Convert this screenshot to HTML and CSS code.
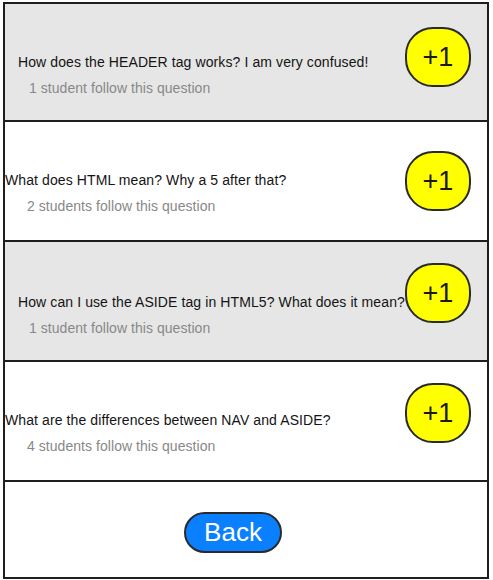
FILE: index.html
```html
<!DOCTYPE html>
<html>
<head>
<meta charset="utf-8">
<link rel="stylesheet" href="styles.css">
</head>
<body>
<div class="board">
  <div class="row row--gray row--first">
    <div class="text text--inset">
      <div class="question">How does the HEADER tag works? I am very confused!</div>
      <div class="follow">1 student follow this question</div>
    </div>
    <div class="plus plus--a">+1</div>
  </div>
  <div class="row">
    <div class="text">
      <div class="question">What does HTML mean? Why a 5 after that?</div>
      <div class="follow follow--deep">2 students follow this question</div>
    </div>
    <div class="plus plus--b">+1</div>
  </div>
  <div class="row row--gray">
    <div class="text text--inset text--low">
      <div class="question">How can I use the ASIDE tag in HTML5? What does it mean?</div>
      <div class="follow">1 student follow this question</div>
    </div>
    <div class="plus plus--c">+1</div>
  </div>
  <div class="row">
    <div class="text">
      <div class="question">What are the differences between NAV and ASIDE?</div>
      <div class="follow follow--deep">4 students follow this question</div>
    </div>
    <div class="plus plus--c">+1</div>
  </div>
  <div class="footer">
    <div class="back">Back</div>
  </div>
</div>
</body>
</html>
```

FILE: styles.css
```css
html, body {
  margin: 0;
  padding: 0;
  background: #fff;
}

body {
  font-family: "Liberation Sans", Arial, sans-serif;
  color: #141414;
}

.board {
  margin: 2px 0 0 3px;
  width: 486px;
  box-sizing: border-box;
  border: 2px solid #1e1e1e;
}

.row {
  display: flex;
  align-items: flex-start;
  height: 120px;
  box-sizing: border-box;
  border-bottom: 2px solid #1e1e1e;
  padding-right: 16px;
  background: #fff;
}

.row--first {
  height: 118px;
}

.row--gray {
  background: #e6e6e6;
}

.text {
  flex: 1 1 auto;
  min-width: 0;
  white-space: nowrap;
  padding-top: 48px;
}

.text--inset {
  padding-left: 13px;
}

.text--low {
  padding-top: 50px;
}

.question {
  font-size: 14px;
  line-height: 20px;
  letter-spacing: 0.1px;
}

.follow {
  margin-top: 6px;
  font-size: 14px;
  line-height: 20px;
  color: #888;
  padding-left: 11px;
  letter-spacing: 0.05px;
}

.follow--deep {
  padding-left: 22px;
}

.plus {
  flex: 0 0 auto;
  width: 66px;
  height: 60px;
  box-sizing: border-box;
  border: 2px solid #2a2a2a;
  border-radius: 28px;
  background: #ffff00;
  color: #1a1a1a;
  font-size: 27px;
  line-height: 56px;
  text-align: center;
}

.plus--a { margin-top: 23px; }
.plus--b { margin-top: 29px; }
.plus--c { margin-top: 21px; }

.footer {
  height: 95px;
  display: flex;
  justify-content: center;
  align-items: flex-start;
  padding: 30px 26px 0 0;
  box-sizing: border-box;
}

.back {
  width: 98px;
  height: 41px;
  box-sizing: border-box;
  border: 2px solid #2a2a2a;
  border-radius: 21px;
  background: #0a80ff;
  color: #fff;
  font-size: 26px;
  line-height: 36px;
  text-align: center;
}
```
